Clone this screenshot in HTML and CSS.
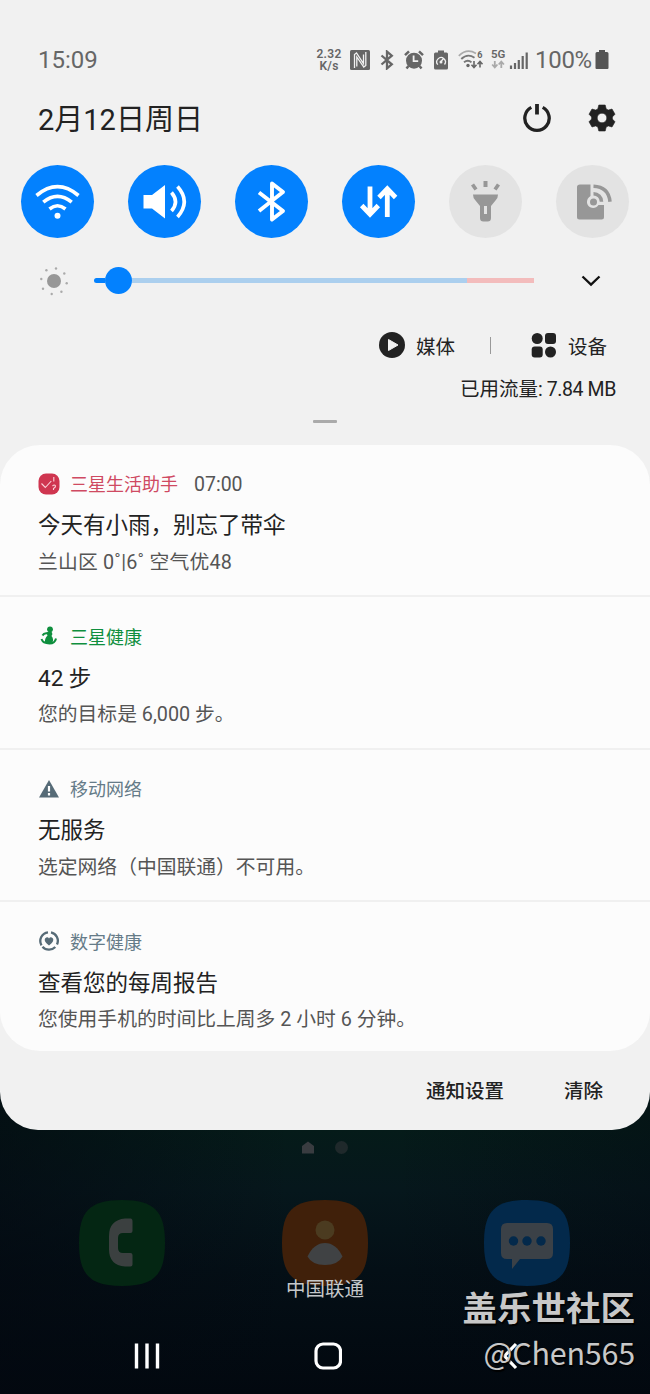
FILE: index.html
```html
<!DOCTYPE html>
<html lang="zh-CN">
<head>
<meta charset="utf-8">
<title>通知面板</title>
<link rel="stylesheet" href="styles.css">
</head>
<body>
<div class="phone">
  <main class="panel">
    <header class="status">
      <span class="clock">15:09</span>
      <div class="status-icons">
        <span class="speed">2.32<br>K/s</span>
        <svg class="nfc" viewBox="0 0 20 20" width="20" height="20"><rect width="20" height="20" rx="1.5" fill="#666"/><path d="M4.500 18V4.500L6.500 3l7 10.500V4.500M15.800 2v13.500l-2 1.500L6.800 7v9.500" fill="none" stroke="#f1f1f1" stroke-width="1.300"/></svg>
        <svg class="bt" viewBox="0 0 14 20" width="14" height="20"><path d="M1.500 5.500l10.300 8.800L7 18.400V1.600l4.800 4.100L1.500 14.500" fill="none" stroke="#666" stroke-width="2.300"/></svg>
        <svg class="alarm" viewBox="0 0 20 20" width="20" height="20"><circle cx="10" cy="10.700" r="8" fill="#666"/><path d="M1 5.200L5 1.400M19 5.200L15 1.400M4.500 16l-2 2.500M15.500 16l2 2.500" stroke="#666" stroke-width="2.500"/><path d="M9.600 5.500v5.700h4.600" fill="none" stroke="#f1f1f1" stroke-width="1.800"/></svg>
        <svg class="saver" viewBox="0 0 14 20" width="14" height="20"><path d="M4 .5h6v2h2.500q1.500 0 1.500 1.500v14q0 1.500-1.500 1.500h-11Q0 19.500 0 18V4q0-1.500 1.500-1.500H4z" fill="#666"/><path d="M3.800 14.700a4.300 4.300 0 1 1 6.700-.2M7 11.500l2.500-3" fill="none" stroke="#f1f1f1" stroke-width="1.300"/><circle cx="7" cy="11.900" r="1.500" fill="#f1f1f1"/></svg>
        <svg class="wifi-small" viewBox="0 0 27 20" width="27" height="20"><g fill="none" stroke="#777"><path d="M.8 5.800Q9-2 18 3.500" stroke="#aaa" stroke-width="1.700"/><path d="M3.300 9Q9.500 3 16.500 7.700" stroke-width="1.900"/><path d="M6 12.200q4-3.200 7.500.2" stroke-width="1.900"/></g><circle cx="10" cy="15.500" r="1.700" fill="#666"/><path d="M16 11v6M13.500 14.800l2.500 2.700 2.500-2.700M22 17.500V12M19.500 14.200l2.500-2.700 2.500 2.700" fill="none" stroke="#666" stroke-width="1.600"/><text x="19.300" y="8" font-size="9" font-weight="700" fill="#666">6</text></svg>
        <svg class="network" viewBox="-2 -4 40 26" width="40" height="26"><text x="0" y="9" font-size="11.500" font-weight="600" fill="#666">5G</text><path d="M3.800 12v6M1.200 15.500l2.600 3 2.600-3M10.300 19v-6M7.700 15.500l2.600-3 2.600 3" fill="none" stroke="#aaa" stroke-width="1.800"/><path d="M20 16.500v3.500M24 14v6M27.800 11v9M31.700 7v13M35.700 3.500V20" stroke="#666" stroke-width="2.200"/></svg>
        <span class="percent">100%</span>
        <svg class="battery" viewBox="0 0 14 20" width="14" height="20"><path d="M4 0h6v2h2q1.500 0 1.500 1.500V18q0 1-1 1h-11q-1 0-1-1V3.500Q.5 2 2 2h2z" fill="#555"/></svg>
      </div>
    </header>

    <section class="date-row">
      <h1>2月12日周日</h1>
      <svg class="power" viewBox="0 0 28 30" width="28" height="30"><path d="M8.300 4.400A12.200 12.200 0 1 0 19.700 4.400" fill="none" stroke="#222" stroke-width="3.300"/><path d="M14 1v10.500" stroke="#222" stroke-width="3.800"/></svg>
      <svg class="gear" viewBox="0 0 28 28" width="28" height="28"><path fill-rule="evenodd" d="M10.800 1h6.400l1 3.900 2.100 1.200L24 5l3 5.200-2.600 2.700v2.200l2.600 2.700L24 23l-3.700-1.100-2.100 1.200-1 3.900h-6.400l-1-3.900-2.100-1.200L4 23l-3-5.200 2.600-2.700v-2.200L1 10.200 4 5l3.700 1.100 2.100-1.200zM14 9.200a4.800 4.800 0 1 0 0 9.600a4.800 4.800 0 1 0 0-9.600z" fill="#222" stroke="#222" stroke-width=".6" stroke-linejoin="round"/></svg>
    </section>

    <section class="toggles">
      <div class="toggle on"><svg viewBox="0 0 73 73"><g fill="none" stroke="#fff" stroke-width="3.600"><path d="M15.500 30.500Q36.500 12.800 57.500 30.500"/><path d="M22.300 37.200Q36.500 25.500 50.700 37.200"/><path d="M28.500 44Q36.500 37.500 44.500 44"/></g><circle cx="36.500" cy="50.700" r="3" fill="#fff"/></svg></div>
      <div class="toggle on"><svg viewBox="0 0 73 73"><path d="M15.500 30h8.500l13-10v33.500l-13-10h-8.500z" fill="#fff"/><path d="M43.500 27.500q8 9.500 0 18.500M49.500 21.500q13.500 15 0 30.500" fill="none" stroke="#fff" stroke-width="3.600"/></svg></div>
      <div class="toggle on"><svg viewBox="0 0 73 73"><path d="M24 27.500L48 46 37 54.500v-36L48 27 24 46" fill="none" stroke="#fff" stroke-width="3.900" stroke-linejoin="round"/></svg></div>
      <div class="toggle on"><svg viewBox="0 0 73 73"><path d="M28 21.500V48M19.700 40.500l8.300 8.700 8.300-8.700M45.300 52V25M37 32.500l8.300-8.700 8.300 8.700" fill="none" stroke="#fff" stroke-width="4.800"/></svg></div>
      <div class="toggle"><svg viewBox="0 0 73 73"><g fill="#979797"><path d="M24 29.500h25q0 4-2.500 6L42 41v12q0 3.500-3.500 3.500h-4Q31 56.500 31 53V41l-4.500-5.500q-2.500-2-2.500-6z"/><path d="M34.500 16h4v6h-4zM22 20.500l3-2 3.500 5-3 2zM51 20.500l-3-2-3.500 5 3 2z"/></g><path d="M35 41h3v8h-3z" fill="#e3e3e3"/></svg></div>
      <div class="toggle"><svg viewBox="0 0 73 73"><path d="M24 19.500h10.500V31q-4 2.500-3.500 7 1 4.500 6 5 3.500 0 5.500-3h5.500v12q0 2.500-2.500 2.500H23.500q-2.500 0-2.500-2.500V22q0-2.500 3-2.500z" fill="#979797"/><circle cx="37.500" cy="37" r="3.500" fill="#979797"/><path d="M37.500 28.700a8 8 0 0 1 8 8M37.500 21.300q15 .5 16.500 15.400" fill="none" stroke="#979797" stroke-width="3.500"/></svg></div>
    </section>

    <section class="brightness">
      <svg class="sun" viewBox="0 0 30 30" width="30" height="30"><circle cx="15" cy="15" r="7" fill="#979797"/><g fill="#aaa"><circle cx="17" cy="2.500" r="1.200"/><circle cx="25.300" cy="7.500" r="1.200"/><circle cx="27.700" cy="17.300" r="1.200"/><circle cx="22.400" cy="25.800" r="1.200"/><circle cx="12.700" cy="28" r="1.200"/><circle cx="4" cy="22.700" r="1.200"/><circle cx="2.300" cy="13" r="1.200"/><circle cx="7.400" cy="4.300" r="1.200"/></g></svg>
      <div class="track"><i class="fill"></i><i class="thumb"></i><i class="rest"></i><i class="high"></i></div>
      <svg class="chevron" viewBox="0 0 20 12" width="20" height="12"><path d="M1.500 1.500l8.500 8.200 8.500-8.200" fill="none" stroke="#111" stroke-width="2.300"/></svg>
    </section>

    <section class="media-row">
      <svg viewBox="0 0 26 26" width="26" height="26"><circle cx="13" cy="13" r="13" fill="#222"/><path d="M9.500 7.500v11l9.500-5.500z" fill="#f1f1f1" stroke="#f1f1f1" stroke-linejoin="round"/></svg>
      <span class="media-label">媒体</span>
      <i class="bar"></i>
      <svg viewBox="0 0 26 26" width="26" height="26"><g fill="#222"><circle cx="6.200" cy="6.500" r="5.500"/><rect x="14" y="1" width="11" height="11" rx="3"/><rect x=".7" y="14.500" width="11" height="11" rx="3"/><circle cx="19.500" cy="20" r="5.500"/></g></svg>
      <span class="device-label">设备</span>
    </section>
    <p class="data">已用流量<span>: 7.84 MB</span></p>
    <i class="handle"></i>

    <section class="card">
      <article class="note">
        <header class="red"><svg viewBox="0 0 22 22" width="22" height="22"><rect x=".5" y=".5" width="21" height="21" rx="7.500" fill="#cf3650"/><path d="M3.500 10.500l3.800 4 6-6.500M15.800 4v4.500M14.500 13q2-2 3 0 0 1.500-2 2.500v1.500" fill="none" stroke="#fbd3da" stroke-width="1.100"/></svg><b>三星生活助手</b><time>07:00</time></header>
        <h2>今天有小雨，别忘了带伞</h2>
        <p class="weather">兰山区 0˚|6˚ 空气优48</p>
      </article>
      <article class="note">
        <header class="green"><svg viewBox="0 0 22 22" width="22" height="22"><g fill="#0f8f3e"><circle cx="12" cy="4.300" r="2.900"/><path d="M8.500 7.500q4-2 5.500 0 1 1.500-.5 3.500 2.500 3 1 6.500-4 2.500-7.500 0-.5-4 2.500-7z"/></g><path d="M10 8.500Q6 7.500 4.500 10.500M3.500 14q1.500 4.500 8 4.500 5.500 0 6.500-5" fill="none" stroke="#0f8f3e" stroke-width="2"/></svg><b>三星健康</b></header>
        <h2>42 步</h2>
        <p>您的目标是 6,000 步。</p>
      </article>
      <article class="note">
        <header class="slate"><svg viewBox="0 0 22 22" width="22" height="22"><path d="M11 2L21 19.500H1z" fill="#566b77"/><path d="M11 8v5.500M11 15v2.500" stroke="#fff" stroke-width="2.200"/></svg><b>移动网络</b></header>
        <h2>无服务</h2>
        <p>选定网络（中国联通）不可用。</p>
      </article>
      <article class="note">
        <header class="slate"><svg viewBox="0 0 22 22" width="22" height="22"><path d="M13 2.300A8.700 8.700 0 0 1 19 14.500M17.300 17A8.700 8.700 0 0 1 4.500 16.700M3.500 15.300A8.700 8.700 0 0 1 10 2.300" fill="none" stroke="#566b77" stroke-width="2.300"/><path d="M11 15.500Q5.500 11.500 7 8.500 9.500 6 11 8.500q1.500-2.500 4 0Q16.500 11.500 11 15.500z" fill="#566b77"/></svg><b>数字健康</b></header>
        <h2>查看您的每周报告</h2>
        <p>您使用手机的时间比上周多 2 小时 6 分钟。</p>
      </article>
    </section>
    <footer class="actions"><span>通知设置</span><span>清除</span></footer>
  </main>

  <section class="home">
    <div class="pages"><svg viewBox="0 0 14 14" width="14" height="14"><path d="M7 .5L1 5v7.500h12V5z" fill="#393c40"/></svg><i></i></div>
    <div class="dock">
      <svg viewBox="0 0 86 86"><path class="app-green" d="M43 0C75 0 86 11 86 43S75 86 43 86 0 75 0 43 11 0 43 0z"/><path d="M53.500 21.500V31q0 2-2 2H44q-5 0-5 5v10q0 5 5 5h7.500q2 0 2 2v9.500q0 2-2 2H46q-16-1.500-16-17V36q0-16 16-17.500h5.500q2 0 2 3z" fill="#3b4040"/></svg>
      <svg viewBox="0 0 86 86"><path class="app-orange" d="M43 0C75 0 86 11 86 43S75 86 43 86 0 75 0 43 11 0 43 0z"/><circle cx="43" cy="30" r="9.500" fill="#4b3b20"/><path d="M43 43q11 0 17.500 13.500Q56 65 43 65T25.500 56.500Q32 43 43 43z" fill="#404244"/></svg>
      <svg viewBox="0 0 86 86"><path class="app-blue" d="M43 0C75 0 86 11 86 43S75 86 43 86 0 75 0 43 11 0 43 0z"/><path d="M23 23h40q6 0 6 6v24q0 6-6 6H36l-8 10v-10h-5q-6 0-6-6V29q0-6 6-6z" fill="#3b4147"/><g fill="#03294b"><circle cx="29.500" cy="41" r="4.700"/><circle cx="43" cy="41" r="4.700"/><circle cx="57" cy="41" r="4.700"/></g></svg>
    </div>
    <p class="carrier">中国联通</p>
    <nav class="nav">
      <svg viewBox="0 0 28 28"><path d="M3.500 1.500v25M14 1.500v25M24.500 1.500v25" stroke="#fff" stroke-width="3.400"/></svg>
      <svg viewBox="0 0 28 28"><rect x="2" y="2" width="24.500" height="24" rx="7" fill="none" stroke="#fff" stroke-width="3.200"/></svg>
      <svg viewBox="0 0 28 28"><path d="M20 2L8.500 14 20 26" fill="none" stroke="#fff" stroke-width="3.200"/></svg>
    </nav>
    <div class="watermark"><strong>盖乐世社区</strong><span>@Chen565</span></div>
  </section>
</div>
</body>
</html>
```
FILE: styles.css
```css
* { box-sizing: border-box; }
body, h1, h2, p { margin: 0; }
body { background: #040d14; font-family: Roboto, "Noto Sans CJK SC", sans-serif; color: #222; }
svg { display: block; flex: none; }
i { display: block; flex: none; }
.phone { width: 650px; height: 1394px; overflow: hidden; background: linear-gradient(90deg, rgba(3,8,16,.6), transparent 45%, transparent 60%, rgba(3,8,16,.35)), linear-gradient(#051b19 1130px, #06171c 1190px, #040f16 1270px, #02080f 1394px); }
.panel { height: 1130px; background: #f1f1f1; border-radius: 0 0 38px 38px; padding-top: 44px; }

.status { height: 32px; padding: 0 41px 0 38px; display: flex; justify-content: space-between; align-items: center; color: #666; }
.clock { font-size: 24px; }
.status-icons { display: flex; align-items: center; }
.status-icons text { font-family: Roboto, sans-serif; }
.speed { width: 26px; font-size: 12px; line-height: 12px; font-weight: 600; text-align: center; letter-spacing: .3px; }
.nfc { margin-left: 8px; }
.bt { margin-left: 10px; }
.alarm { margin-left: 10px; }
.saver { margin-left: 10px; }
.wifi-small { margin-left: 10px; }
.network { margin: -4px 0 0 4px; }
.percent { width: 57px; margin-left: 6px; font-size: 24px; letter-spacing: -.3px; white-space: nowrap; }
.battery { margin-left: 3px; }

.date-row { height: 84px; padding: 0 34px 0 38px; display: flex; align-items: center; }
.date-row h1 { flex: 1; padding-top: 3px; font-size: 29px; line-height: 40px; font-weight: 400; }
.gear { margin-left: 37px; }

.toggles { height: 83px; padding-left: 20.500px; display: flex; gap: 34px; align-items: center; }
.toggle { width: 73px; height: 73px; border-radius: 50%; background: #e3e3e3; }
.toggle.on { background: #0381fe; }

.brightness { height: 75px; padding-left: 39px; display: flex; align-items: center; }
.track { width: 440px; margin-left: 25px; display: flex; align-items: center; }
.fill { width: 11px; height: 5px; background: #0381fe; border-radius: 3px 0 0 3px; }
.thumb { width: 27px; height: 27px; border-radius: 50%; background: #0381fe; }
.rest { width: 335px; height: 5px; background: #abcfee; }
.high { width: 67px; height: 5px; background: #f3bcbc; }
.chevron { margin-left: 47px; }

.media-row { height: 54px; padding-left: 379px; display: flex; align-items: center; font-size: 19.500px; }
.media-label { margin-left: 11px; }
.bar { width: 1px; height: 17px; margin: 0 40px 0 35px; background: #999; }
.device-label { margin-left: 11px; }
.data { height: 30px; padding: 3px 34px 0 0; text-align: right; font-size: 19.500px; line-height: 30px; }
.data span { letter-spacing: -.4px; }
.handle { width: 24px; height: 3px; border-radius: 1px; margin: 18px auto 21.500px 313px; background: #aaa; }

.card { height: 606px; border-radius: 40px; background: #fcfcfc; }
.note { height: 152.500px; padding: 24px 38px 0; border-bottom: 2px solid #f0f0f0; }
.note:last-child { border-bottom: 0; }
.note header { height: 30px; display: flex; align-items: center; font-size: 18px; }
.note header b { font-weight: 400; margin: -1px 0 0 10px; }
.note time { margin: 1px 0 0 16px; font-size: 19.500px; color: #555; }
.note h2 { font-size: 22.500px; line-height: 36px; font-weight: 400; margin-top: 8.500px; }
.note p { font-size: 19.800px; line-height: 32px; margin-top: 3.500px; color: #555; }
.note .weather { letter-spacing: .2px; }
.red { color: #cf4a62; }
.green { color: #0f8f3e; }
.slate { color: #657b88; }
.actions { height: 77px; padding-right: 47px; display: flex; justify-content: flex-end; align-items: center; gap: 60px; font-size: 19.500px; font-weight: 500; }

.home { position: relative; height: 264px; }
.pages { height: 70px; padding: 11px 0 0 301px; display: flex; gap: 20px; }
.pages i { width: 13px; height: 13px; border-radius: 50%; background: #1f292b; }
.dock { height: 85px; padding-left: 79px; display: flex; gap: 116.500px; }
.dock svg { width: 86px; height: 86px; }
.app-green { fill: #042613; }
.app-orange { fill: #40200a; }
.app-blue { fill: #03294b; }
.carrier { position: absolute; top: 145px; width: 650px; text-align: center; font-size: 19.500px; line-height: 30px; color: #c5c8ca; }
.nav { height: 109px; padding: 57px 0 0 132.500px; display: flex; gap: 153.500px; }
.nav svg { width: 28px; height: 28px; }
.watermark { position: absolute; top: 154px; right: 15px; text-align: right; color: #c8c8c8; text-shadow: 1px 2px 1px #000; white-space: nowrap; }
.watermark strong { display: block; font-size: 34.500px; line-height: 50px; font-weight: 700; }
.watermark span { display: block; font-family: "Noto Sans CJK SC", sans-serif; font-size: 30.500px; line-height: 36px; letter-spacing: -.2px; }
```
